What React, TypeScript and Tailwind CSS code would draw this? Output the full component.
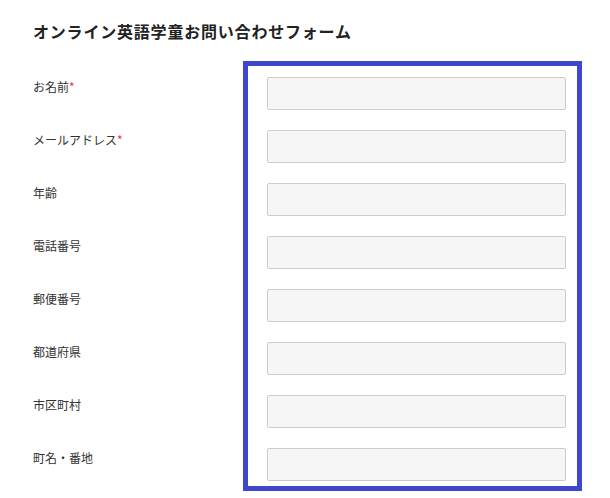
const fields: { label: string; required?: boolean }[] = [
  { label: 'お名前', required: true },
  { label: 'メールアドレス', required: true },
  { label: '年齢' },
  { label: '電話番号' },
  { label: '郵便番号' },
  { label: '都道府県' },
  { label: '市区町村' },
  { label: '町名・番地' },
];

export default function App() {
  return (
    <div
      className="h-[498px] w-[610px] overflow-hidden bg-white pl-[33px] pt-[20px] text-[#222]"
      style={{ fontFamily: '"Noto Sans CJK JP", "Noto Sans", sans-serif' }}
    >
      {/* Title */}
      <h1 className="text-[16px] font-bold leading-[22px] tracking-[0.05em]">
        オンライン英語学童お問い合わせフォーム
      </h1>

      <div className="mt-[19px] flex items-start">
        {/* Labels */}
        <div className="flex w-[210px] flex-col pt-[17px]">
          {fields.map((f) => (
            <div key={f.label} className="h-[53px] text-[12px] leading-[18px] text-[#333]">
              {f.label}
              {f.required && <span className="text-[#e33]">*</span>}
            </div>
          ))}
        </div>

        {/* Inputs */}
        <div className="w-[339px] border-[5px] border-[#3f48cc] pb-[5px] pl-[19px] pr-[11px] pt-[11px]">
          <div className="flex flex-col gap-[20px]">
            {fields.map((f) => (
              <input
                key={f.label}
                type="text"
                className="h-[33px] w-full rounded-[2px] border border-[#cccccc] bg-[#f6f6f6] outline-none"
              />
            ))}
          </div>
        </div>
      </div>
    </div>
  );
}
